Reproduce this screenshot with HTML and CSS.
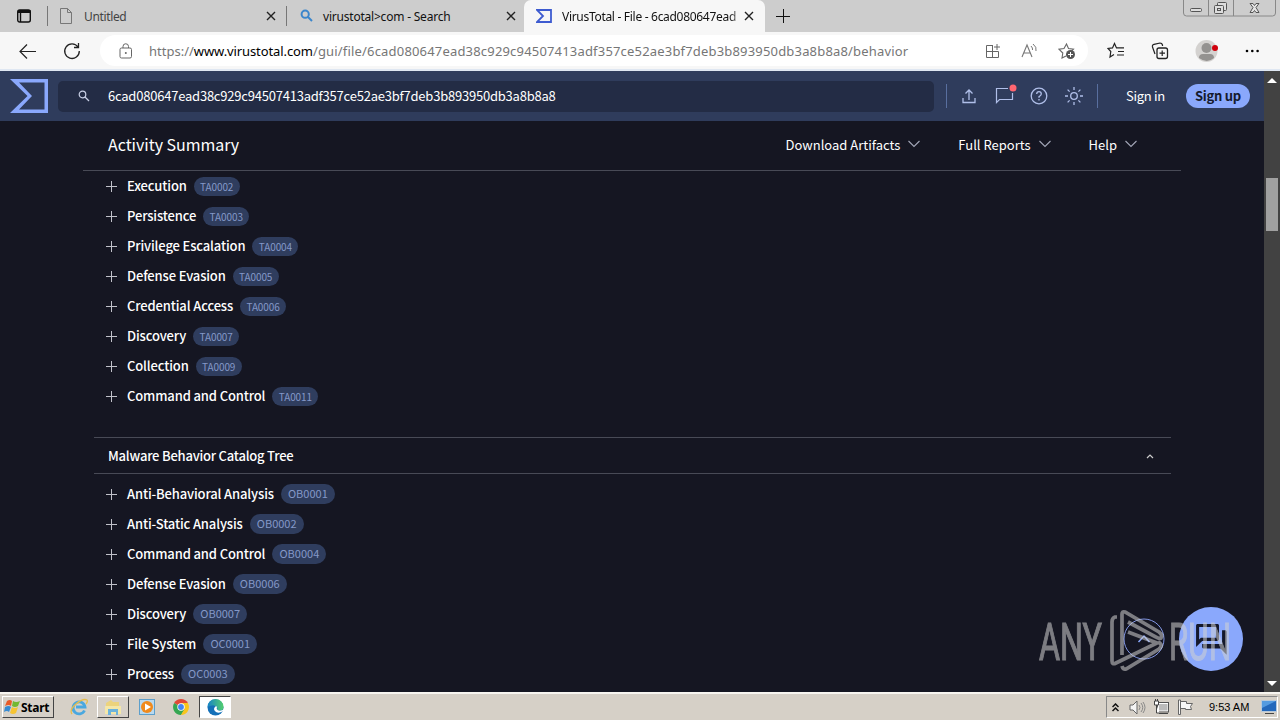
FILE: index.html
```html
<!DOCTYPE html>
<html lang="en">
<head>
<meta charset="utf-8">
<title>VirusTotal - File</title>
<link rel="stylesheet" href="styles.css">
</head>
<body>
<div class="tabs">
  <div class="tab-menu"><svg width="16" height="16" viewBox="0 0 16 16"><rect x="1.700" y="2" width="12.600" height="12" rx="2" fill="none" stroke="#111" stroke-width="1.400"/><path d="M2 3.500h12.500" stroke="#111" stroke-width="3"/><path d="M4.500 4v10" stroke="#111" stroke-width="1.400"/></svg></div>
  <div class="tab t1"><svg class="fav" width="14" height="18" viewBox="0 0 14 18"><path d="M1.500 1.500h7l4 4v11h-11zM8.500 1.500v4h4" fill="none" stroke="#777"/></svg><span class="tab-title grey">Untitled</span><svg class="x" width="10" height="10" viewBox="0 0 10 10"><path d="M1 1l8 8M9 1l-8 8" stroke="#222" stroke-width="1.400"/></svg></div>
  <div class="tab t2"><svg class="fav" width="14" height="14" viewBox="0 0 14 14"><circle cx="5.200" cy="5.200" r="3.600" fill="none" stroke="#3b86cc" stroke-width="2"/><path d="M8 8l4 4" stroke="#3b86cc" stroke-width="2"/></svg><span class="tab-title">virustotal&gt;com - Search</span><svg class="x" width="10" height="10" viewBox="0 0 10 10"><path d="M1 1l8 8M9 1l-8 8" stroke="#222" stroke-width="1.400"/></svg></div>
  <div class="tab t3"><svg class="fav" width="16" height="14" viewBox="0 0 16 14"><path d="M1 1h14v12H1l6-6z" fill="none" stroke="#3d5bd0" stroke-width="1.800"/></svg><span class="tab-title fade">VirusTotal - File - 6cad080647ead</span><svg class="x" width="10" height="10" viewBox="0 0 10 10"><path d="M1 1l8 8M9 1l-8 8" stroke="#222" stroke-width="1.400"/></svg></div>
  <svg class="new-tab" width="14" height="14" viewBox="0 0 14 14"><path d="M7.500 0v14M0 7.500h14" stroke="#111"/></svg>
  <div class="win"><svg width="94" height="18" viewBox="0 0 94 18"><path d="M.5 0v13q0 3 3 3h86q3 0 3-3V0M25.500 0v16M50.500 0v16" fill="none" stroke="#888"/><rect x="7.500" y="8.500" width="11" height="3" rx="1" fill="#ddd" stroke="#555"/><rect x="34.500" y="2.500" width="9" height="8" rx="1" fill="#ddd" stroke="#555"/><rect x="31.500" y="5.500" width="9" height="8" rx="1" fill="#ddd" stroke="#555"/><rect x="34.500" y="8.500" width="3" height="2" fill="none" stroke="#555"/><path d="M67 3.500h3l1.500 2 1.500-2h3l-3 4 3 5h-3l-1.500-2-1.500 2h-3l3-5z" fill="#e4e4e4" stroke="#555"/></svg></div>
</div>
<div class="toolbar">
  <svg class="back" width="18" height="16" viewBox="0 0 18 16"><path d="M17 8.500H1.500M8 1.500L1 8.500l7 7" fill="none" stroke="#222" stroke-width="1.200"/></svg>
  <svg class="reload" width="18" height="18" viewBox="0 0 18 18"><path d="M15 5a7.300 7.300 0 1 0 1.300 4M15.500 1v4.500H11" fill="none" stroke="#222" stroke-width="1.300"/></svg>
  <div class="address">
    <svg width="14" height="16" viewBox="0 0 14 16"><rect x="1" y="5" width="11.500" height="10" rx="1.500" fill="none" stroke="#666"/><path d="M4 5V3.500a2.700 2.700 0 0 1 5.500 0V5" fill="none" stroke="#666"/><circle cx="6.800" cy="10" r="1" fill="#666"/></svg>
    <div class="url">https://<b>www.virustotal.com</b><span class="path">/gui/file/6cad080647ead38c929c94507413adf357ce52ae3bf7deb3b893950db3a8b8a8/behavior</span></div>
    <svg class="a1" width="16" height="16" viewBox="0 0 16 16"><path d="M8 2.500H1.500v12h12V8.500M1.500 8.500h12M7.500 2.500v12M12 1v6M9 4h6" fill="none" stroke="#666"/></svg>
    <svg class="a2" width="18" height="16" viewBox="0 0 18 16"><path d="M1 14L6 2l5 12M3 10h6" fill="none" stroke="#777" stroke-width="1.100"/><path d="M10 3q2 2 1.500 4M12 1q4 3 3 7" fill="none" stroke="#777"/></svg>
    <svg class="a3" width="18" height="18" viewBox="0 0 18 18"><path d="M8 14l-4 2 .8-5L1 7.200l5-.7L8.500 2l2 4.500 5 .7-2 2" fill="none" stroke="#666" stroke-width="1.100"/><circle cx="12.500" cy="12.500" r="4.500" fill="#555"/><path d="M12.500 10v5M10 12.500h5" stroke="#fff"/></svg>
  </div>
  <svg class="b1" width="18" height="17" viewBox="0 0 18 17"><path d="M7 12.500l-4 2.500.8-5.500L1 6.500l4.500-.6L7.500 1.500l2 4.400H17M11 9.500h6M10 13h7" fill="none" stroke="#222" stroke-width="1.200"/></svg>
  <svg class="b2" width="18" height="18" viewBox="0 0 18 18"><rect x="6" y="6" width="10.500" height="10.500" rx="2" fill="none" stroke="#222" stroke-width="1.300"/><path d="M11.200 8.500v5.500M8.500 11.200H14M4 12L1.500 5q-.5-2 1.500-2.700L9 1q2 0 2.500 2v1" fill="none" stroke="#222" stroke-width="1.200"/></svg>
  <svg class="b3" width="24" height="22" viewBox="0 0 24 22"><circle cx="11.500" cy="11" r="11" fill="#d4d2d0"/><circle cx="11.500" cy="8" r="5" fill="#949290"/><path d="M4 18q0-4 4-4h7q4 0 4 4-7 6-15 0z" fill="#949290"/><circle cx="20" cy="8" r="3" fill="#d0000c"/></svg>
  <svg class="b4" width="15" height="4" viewBox="0 0 15 4"><circle cx="2" cy="2" r="1.300"/><circle cx="7.300" cy="2" r="1.300"/><circle cx="12.600" cy="2" r="1.300"/></svg>
</div>
<div class="viewport">
<div class="page">
  <header class="vt">
    <svg class="vt-logo" width="38" height="34" viewBox="0 0 38 34"><path fill="#8aa8fc" fill-rule="evenodd" d="M0 0h38v34H0l17.500-17zM9 3.500L22 17 9 30.500h25.500v-27z"/></svg>
    <div class="search"><svg width="12" height="12" viewBox="0 0 12 12"><circle cx="4.500" cy="4.500" r="3.300" fill="none" stroke="#c9d0e6" stroke-width="1.200"/><path d="M7 7l4 4" stroke="#c9d0e6" stroke-width="1.300"/></svg><span>6cad080647ead38c929c94507413adf357ce52ae3bf7deb3b893950db3a8b8a8</span></div>
    <i class="sep s1"></i>
    <svg class="h1" width="14" height="16" viewBox="0 0 14 16"><path d="M1 10v4.500h12V10M7 12V2M3.500 5.500L7 2l3.500 3.500" fill="none" stroke="#b0bfe9" stroke-width="1.300"/></svg>
    <svg class="h2" width="22" height="20" viewBox="0 0 22 20"><path d="M13 4.500H1.500v14l3-3h13V9" fill="none" stroke="#b0bfe9" stroke-width="1.200"/><circle cx="18" cy="4" r="3.500" fill="#ff6670"/></svg>
    <svg class="h3" width="18" height="18" viewBox="0 0 18 18"><circle cx="9" cy="9" r="7.800" fill="none" stroke="#b0bfe9" stroke-width="1.300"/><path d="M6.700 7q0-2.400 2.300-2.400T11.300 7Q11.300 8 9 9.700v1M9 12v1.500" fill="none" stroke="#b0bfe9" stroke-width="1.300"/></svg>
    <svg class="h4" width="20" height="20" viewBox="0 0 20 20"><circle cx="10" cy="10" r="3.300" fill="none" stroke="#b0bfe9" stroke-width="1.300"/><path d="M10 1v3M10 16v3M1 10h3M16 10h3M3.600 3.600l2 2M14.400 14.400l2 2M3.600 16.400l2-2M14.400 5.600l2-2" stroke="#b0bfe9" stroke-width="1.300"/></svg>
    <i class="sep s2"></i>
    <span class="signin">Sign in</span><span class="signup">Sign up</span>
  </header>
  <div class="summary">
    <h1>Activity Summary</h1>
    <div class="drop d1"><span>Download Artifacts</span><svg width="12" height="8" viewBox="0 0 12 8"><path d="M.5 1L6 6.500 11.500 1" fill="none" stroke="#a3a7b8" stroke-width="1.100"/></svg></div>
    <div class="drop d2"><span>Full Reports</span><svg width="12" height="8" viewBox="0 0 12 8"><path d="M.5 1L6 6.500 11.500 1" fill="none" stroke="#a3a7b8" stroke-width="1.100"/></svg></div>
    <div class="drop d3"><span>Help</span><svg width="12" height="8" viewBox="0 0 12 8"><path d="M.5 1L6 6.500 11.500 1" fill="none" stroke="#a3a7b8" stroke-width="1.100"/></svg></div>
  </div>
  <ul class="tree ta">
    <li><i class="plus"></i><span>Execution</span><em>TA0002</em></li>
    <li><i class="plus"></i><span>Persistence</span><em>TA0003</em></li>
    <li><i class="plus"></i><span>Privilege Escalation</span><em>TA0004</em></li>
    <li><i class="plus"></i><span>Defense Evasion</span><em>TA0005</em></li>
    <li><i class="plus"></i><span>Credential Access</span><em>TA0006</em></li>
    <li><i class="plus"></i><span>Discovery</span><em>TA0007</em></li>
    <li><i class="plus"></i><span>Collection</span><em>TA0009</em></li>
    <li><i class="plus"></i><span>Command and Control</span><em>TA0011</em></li>
  </ul>
  <div class="section"><span>Malware Behavior Catalog Tree</span><svg width="8" height="6" viewBox="0 0 8 6"><path d="M1 5l3-3 3 3" fill="none" stroke="#ccc" stroke-width="1.200"/></svg></div>
  <ul class="tree ob">
    <li><i class="plus"></i><span>Anti-Behavioral Analysis</span><em>OB0001</em></li>
    <li><i class="plus"></i><span>Anti-Static Analysis</span><em>OB0002</em></li>
    <li><i class="plus"></i><span>Command and Control</span><em>OB0004</em></li>
    <li><i class="plus"></i><span>Defense Evasion</span><em>OB0006</em></li>
    <li><i class="plus"></i><span>Discovery</span><em>OB0007</em></li>
    <li><i class="plus"></i><span>File System</span><em>OC0001</em></li>
    <li><i class="plus"></i><span>Process</span><em>OC0003</em></li>
  </ul>
</div>
<div class="scroll"><svg width="10" height="5" viewBox="0 0 10 5"><path d="M0 5l5-5 5 5z" fill="#fff"/></svg><div class="thumb"></div><svg class="down" width="10" height="5" viewBox="0 0 10 5"><path d="M0 0l5 5 5-5z" fill="#fff"/></svg></div>
<svg class="chat" width="64" height="64" viewBox="0 0 64 64"><circle cx="32" cy="32" r="32" fill="#8aa8fc"/><path transform="translate(14 14) scale(1.530)" d="M15 4v7H5.170L4 12.170V4h11m1-2H3c-.55 0-1 .45-1 1v14l4-4h10c.55 0 1-.45 1-1V3c0-.55-.45-1-1-1zm5 4h-2v9H6v2c0 .55.45 1 1 1h11l4 4V7c0-.55-.45-1-1-1z" fill="#14182b"/></svg>
<svg class="top" width="42" height="42" viewBox="0 0 42 42"><circle cx="21" cy="21" r="20" fill="#151622" stroke="#8297e4"/><path d="M15.500 24l5.500-6 5.500 6" fill="none" stroke="#8aa8fc" stroke-width="1.500"/></svg>
<svg class="watermark" width="210" height="70" viewBox="0 0 210 70"><text x="0" y="51" textLength="63" lengthAdjust="spacingAndGlyphs">ANY</text><path transform="translate(71 1)" d="M7 7H5Q2 8 2 12v39q0 4 4 2l41-20L18 22M12 45V4q0-3 3-2l34 20q4 3 2 6-2 1-5-1L18 12M12 56q1 4 4 3l33-20q5-4-1-7" fill="none" stroke="#d2d2d2" stroke-width="3.700"/><text x="130" y="51" textLength="62" lengthAdjust="spacingAndGlyphs">RUN</text></svg>
</div>
<div class="taskbar">
  <div class="start"><svg width="17" height="16" viewBox="0 0 17 16"><path d="M3 2q3-2 5 0L7 7Q5 5 1 7z" fill="#e85b28"/><path d="M9 2q3 2 7 0l-2 5q-3 2-6 0z" fill="#72b832"/><path d="M1 8q4-2 6 0l-2 5q-2-2-5 0z" fill="#378bd2"/><path d="M8 8q3 2 6 0l-2 6q-3 2-6 0z" fill="#f6c432"/></svg><b>Start</b></div>
  <svg class="q1" width="18" height="18" viewBox="0 0 18 18"><path d="M14.500 12.500A6 6 0 1 1 15 9H6" fill="none" stroke="#4aa8df" stroke-width="2.800"/><path d="M2 16Q-1 12 6 6t11-4q1 2-1 4" fill="none" stroke="#e5bd4d" stroke-width="1.300"/></svg>
  <div class="task-exp"><svg width="18" height="17" viewBox="0 0 18 17"><path d="M2 4l5-3 2 2h6v11H2z" fill="#ecd37c"/><path d="M1 7h16v8H1z" fill="#f4e7a8"/><path d="M4 16v-6h10v6h-2v-3H7v3z" fill="#6cb3dc"/></svg></div>
  <svg class="q2" width="16" height="16" viewBox="0 0 16 16"><rect x=".5" y=".5" width="15" height="15" fill="#b9d9ef" stroke="#5d9fcb"/><circle cx="8" cy="8" r="6" fill="#f08a1d"/><path d="M6 4.500v7L12 8z" fill="#fff"/></svg>
  <svg class="q3" width="16" height="16" viewBox="0 0 16 16"><path d="M8 8L1.100 4A8 8 0 0 1 14.900 4z" fill="#df4937"/><path d="M8 8L1.100 4A8 8 0 0 0 8 16l4-6z" fill="#35a652"/><path d="M8 4h6.900A8 8 0 0 1 8 16l4-7z" fill="#f8c51d"/><circle cx="8" cy="8" r="3.700" fill="#fff"/><circle cx="8" cy="8" r="2.900" fill="#4285f4"/></svg>
  <div class="task-edge"><svg width="17" height="17" viewBox="0 0 17 17"><defs><linearGradient id="eg" x1="0" y1="0" x2="1" y2="0"><stop offset="0" stop-color="#1683c8"/><stop offset="1" stop-color="#54cf6d"/></linearGradient></defs><circle cx="8.500" cy="8.500" r="8" fill="#1470b8"/><path d="M.5 8A8 8 0 0 1 16.500 8q0 4-5 3.500-2-1-1-2.500Q8 4 .5 8z" fill="url(#eg)"/><path d="M9 7q-4 3 0 6 3 1.500 6.500-.5l1.500-2q-4 2-6.500.5Q9 9 10 8z" fill="#fff"/></svg></div>
  <div class="tray">
    <svg class="r1" width="7" height="9" viewBox="0 0 7 9"><path d="M.5 4l3-3 3 3M.5 8l3-3 3 3" fill="none" stroke="#111" stroke-width="1.500"/></svg>
    <svg class="r2" width="17" height="15" viewBox="0 0 17 15"><path d="M1 5h3l4-4v13l-4-4H1z" fill="#f4f4f4" stroke="#666"/><path d="M10 5q2 2.500 0 5M12 3q3.500 4.500 0 9M14 2q4 5.500 0 11" fill="none" stroke="#888"/></svg>
    <svg class="r3" width="16" height="16" viewBox="0 0 16 16"><rect x="5.500" y="4.500" width="9.500" height="7.500" fill="#bbb" stroke="#fff"/><rect x="4.500" y="3.500" width="11" height="9.500" fill="none" stroke="#555"/><path d="M6 14.500h9" fill="none" stroke="#444"/><path d="M1.500 2v4h4V2zM2.500 0v2M4.500 0v2M3.500 6v8h3" fill="#fff" stroke="#444"/></svg>
    <svg class="r4" width="17" height="16" viewBox="0 0 17 16"><path d="M1.500 1v14.500h2V1zM3.500 2.500h6v2h6l-2 3 1 3h-6v-1h-5z" fill="#f7f7f7" stroke="#666"/></svg>
    <span>9:53 AM</span>
    <svg class="r5" width="16" height="14" viewBox="0 0 16 14"><rect x=".5" y=".5" width="15" height="11" fill="#2468bb" stroke="#b9c9d9"/><path d="M1 1h14L1 8z" fill="#559be0"/><path d="M4 13.500h9" stroke="#444"/></svg>
  </div>
</div>
</body>
</html>
```
FILE: styles.css
```css
*{box-sizing:border-box}
body{margin:0;width:1280px;height:720px;overflow:hidden;display:flex;flex-direction:column;font-family:"Noto Sans CJK SC",sans-serif;font-size:13px;background:#151622}
svg{display:block;flex:none}
span,b,em,h1{white-space:nowrap}
.tabs{height:32px;background:#cdcdcd;display:flex;align-items:center;flex:none;font-family:"Noto Sans",sans-serif;font-size:12px;color:#111}
.tab-menu{width:48px;height:20px;border-right:1px solid #777;padding:2px 0 0 16px}
.tab{display:flex;align-items:center;height:20px}
.t1{width:239px;border-right:1px solid #777;padding:0 10px 0 11px}
.t2{width:237px;padding:0 8px 0 13px}
.t3{width:241px;height:32px;background:#f7f7f7;border-radius:7px 7px 0 0;padding:0 11px 0 12px}
.tab-title{margin-left:11px;flex:1;letter-spacing:-.35px}
.t2 .tab-title{margin-left:9px;letter-spacing:-.21px}
.t3 .tab-title{margin-left:10px;letter-spacing:-.3px}
.grey{color:#444}
.t3 .fade{mask-image:linear-gradient(90deg,#000 91%,rgba(0,0,0,.3))}
.new-tab{margin-left:11px}
.win{margin-left:auto;align-self:flex-start;margin-right:3px}
.toolbar{height:39px;background:#f7f7f7;border-bottom:2px solid #dfe7f2;display:flex;align-items:center;flex:none}
.back{margin-left:19px}
.reload{margin-left:26px}
.address{margin-left:19px;width:988px;height:31px;border-radius:16px;background:#fff;display:flex;align-items:center;padding-left:19px}
.url{font-family:"Noto Sans",sans-serif;font-size:13px;color:#767676;width:760px;margin-left:16px;white-space:nowrap}
.url b{font-weight:400;color:#000;letter-spacing:-.1px}
.path{letter-spacing:.18px}
.a1{margin-left:76px}
.a2{margin-left:20px}
.a3{margin-left:19px}
.b1{margin-left:19px}
.b2{margin-left:26px}
.b3{margin-left:26px}
.b4{margin-left:26px}
.viewport{height:621px;display:flex;position:relative;flex:none;overflow:hidden}
.page{width:1264px}
.vt{height:50px;background:#2f3c5c;display:flex;align-items:center;color:#fff}
.vt-logo{margin-left:10px}
.search{margin-left:10px;width:876px;height:31px;border-radius:5px;background:#232c45;display:flex;align-items:center;padding-left:20px}
.search span{margin-left:18px;padding-bottom:1px;font-size:13px;letter-spacing:-.22px}
.sep{width:1px;height:24px;background:#596f9f}
.s1{margin-left:12px}
.h1{margin-left:15px}
.h2{margin-left:19px;margin-top:-4px}
.h3{margin-left:13px}
.h4{margin-left:16px}
.s2{margin-left:13px}
.signin{margin-left:28px;width:60px;padding-bottom:1px;letter-spacing:-.3px}
.signup{width:64px;height:24px;line-height:24px;border-radius:12px;text-align:center;background:#8aa8fc;color:#151a2d;font-weight:700;letter-spacing:-.25px}
.summary{margin:0 83px;height:50px;border-bottom:1px solid #484a56;display:flex;align-items:center;padding:0 44px 2px 25px;color:#fff}
h1{font-size:16px;font-weight:400;margin:0;padding-bottom:2px;flex:1;letter-spacing:-.04px}
.drop{display:flex;align-items:center;gap:8px}
.drop svg{margin-top:-2px}
.d2,.d3{margin-left:38px}
.tree{list-style:none;margin:0;padding:0 0 0 106px}
.tree li{height:30px;display:flex;align-items:center}
.plus{width:11px;height:11px;background:linear-gradient(#c0c1c9,#c0c1c9) 5px 0/1px 11px no-repeat,linear-gradient(#c0c1c9,#c0c1c9) 0 5px/11px 1px no-repeat}
.tree span{margin:0 7px 0 10px;padding-bottom:1px;color:#fff;font-weight:500;letter-spacing:-.14px}
.tree em{font-style:normal;background:#2f3d5e;color:#8498c8;border-radius:10px;text-align:center}
.ta em{width:46px;height:19px;line-height:19px;font-size:10px;letter-spacing:-.1px}
.ob em{width:54px;height:20px;line-height:19px;font-size:11px}
.section{margin:26px 93px 5px 94px;height:37px;border:1px solid #484a56;border-width:1px 0;display:flex;align-items:center;justify-content:space-between;padding:0 17px 0 14px;color:#fff;font-weight:500;letter-spacing:-.22px}
.section span{padding-bottom:1px}
.scroll{width:16px;background:#424242;display:flex;flex-direction:column;align-items:center;padding:7px 0 6px}
.thumb{width:12px;height:53px;background:#a0a0a0;margin-top:95px}
.down{margin-top:auto}
.chat{position:absolute;left:1179px;top:536px}
.top{position:absolute;left:1123px;top:547px}
.watermark{position:absolute;left:1039px;top:538px;opacity:.55;font:52px Roboto,sans-serif;fill:#d2d2d2;overflow:visible}
.watermark text{stroke:#d2d2d2;stroke-width:1.2px}
.taskbar{height:28px;background:#d6d0c7;border-top:2px solid #f7f5f0;display:flex;align-items:center;flex:none}
.start{width:52px;height:22px;margin-left:2px;border:1px solid;border-color:#fff #444 #444 #fff;display:flex;align-items:center;padding-left:1px}
.start b{font:700 12px "Noto Sans",sans-serif;letter-spacing:-.25px}
.q1{margin-left:16px}
.task-exp,.task-edge{width:32px;height:22px;border:1px solid;border-color:#fff #444 #444 #fff;display:grid;place-items:center}
.task-exp{margin-left:9px}
.q2{margin-left:10px}
.q3{margin-left:18px}
.task-edge{margin-left:10px;background:#fff;border-color:#444 #fff #fff #444}
.tray{margin-left:auto;margin-right:2px;width:172px;height:22px;border:1px solid;border-color:#888 #fff #fff #888;display:flex;align-items:center;font:11px "Liberation Sans",sans-serif}
.r1{margin-left:5px}
.r2{margin-left:10px}
.r3{margin-left:7px}
.r4{margin-left:8px}
.tray span{margin-left:15px;width:50px}
.r5{margin-left:2px}
```
